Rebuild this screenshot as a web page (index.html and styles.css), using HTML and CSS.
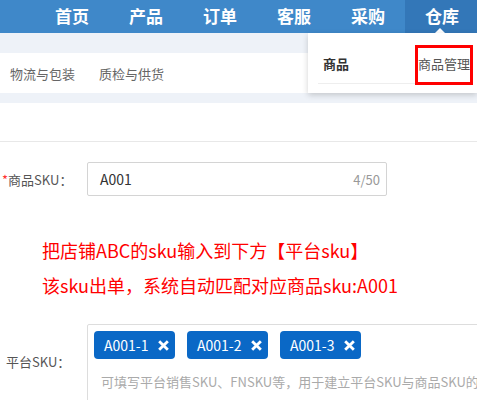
FILE: index.html
```html
<!DOCTYPE html>
<html lang="zh-CN">
<head>
    <meta charset="UTF-8">
    <meta name="viewport" content="width=device-width, initial-scale=1.0">
    <title>商品管理</title>
    <link rel="stylesheet" href="styles.css">
</head>
<body>
    <div id="page">
        <!-- Top navigation -->
        <nav id="nav-top">
            <a class="nav-item">首页</a>
            <a class="nav-item">产品</a>
            <a class="nav-item">订单</a>
            <a class="nav-item">客服</a>
            <a class="nav-item">采购</a>
            <a class="nav-item active">仓库</a>
        </nav>

        <div id="dropdown">
            <div class="dropdown-row">
                <span class="dropdown-title">商品</span>
                <span class="dropdown-link">商品管理</span>
            </div>
        </div>

        <div class="band"></div>
        <div id="sub-nav">
            <span class="sub-item">物流与包装</span>
            <span class="sub-item">质检与供货</span>
        </div>
        <div class="band short"></div>

        <!-- Form -->
        <div id="form-head"></div>
        <div class="form-row">
            <label class="form-label"><em>*</em>商品SKU：</label>
            <div class="text-input">
                <span class="input-value">A001</span>
                <span class="input-count">4/50</span>
            </div>
        </div>

        <div class="note">
            <p>把店铺ABC的sku输入到下方【平台sku】</p>
            <p>该sku出单，系统自动匹配对应商品sku:A001</p>
        </div>

        <div class="form-row tags-row">
            <label class="form-label">平台SKU：</label>
            <div class="tag-input">
                <div class="tags">
                    <span class="tag">A001-1<svg class="tag-close" viewBox="0 0 12 12"><path d="M2 2L10 10M10 2L2 10"/></svg></span>
                    <span class="tag">A001-2<svg class="tag-close" viewBox="0 0 12 12"><path d="M2 2L10 10M10 2L2 10"/></svg></span>
                    <span class="tag">A001-3<svg class="tag-close" viewBox="0 0 12 12"><path d="M2 2L10 10M10 2L2 10"/></svg></span>
                </div>
                <span class="placeholder">可填写平台销售SKU、FNSKU等，用于建立平台SKU与商品SKU的关联</span>
            </div>
        </div>
    </div>
</body>
</html>
```

FILE: styles.css
```css
*{
    box-sizing: border-box;
}
body{
    margin: 0;
    font-family: "Noto Sans CJK SC", "Liberation Sans", sans-serif;
    color: #555;
    background: #fff;
    overflow: hidden;
}
#page{
    position: relative;
    width: 477px;
    height: 400px;
    overflow: hidden;
}
/*
* Top navigation
*/
#nav-top{
    display: flex;
    height: 33px;
    padding-left: 35px;
    background-color: #3f88c9;
}
.nav-item{
    flex: 0 0 74px;
    display: flex;
    align-items: center;
    justify-content: center;
    padding-bottom: 3px;
    color: #fff;
    font-size: 17px;
    font-weight: bold;
}
.nav-item.active{
    position: relative;
    background-color: #3377b8;
}
.nav-item.active::after{
    content: "";
    position: absolute;
    left: 30px;
    bottom: 0;
    border: 5px solid transparent;
    border-bottom-color: #fff;
    border-top: 0;
}
/*
* Sub navigation
*/
.band{
    height: 20px;
    background-color: #eef2f8;
}
.band.short{
    height: 10px;
}
#sub-nav{
    display: flex;
    align-items: center;
    gap: 24px;
    height: 40px;
    padding-left: 10px;
    font-size: 13px;
    color: #666;
}
/*
* Dropdown
*/
#dropdown{
    position: absolute;
    left: 308px;
    top: 33px;
    width: 169px;
    height: 60px;
    padding: 14px 6px 0 10px;
    background: #fff;
    box-shadow: 0 2px 6px rgba(0, 0, 0, 0.18);
    z-index: 2;
}
.dropdown-row{
    display: flex;
    align-items: center;
    justify-content: space-between;
    height: 37px;
    padding-left: 5px;
    border-bottom: 1px solid #eee;
}
.dropdown-title{
    font-size: 13px;
    font-weight: bold;
    color: #333;
    padding-bottom: 3px;
}
.dropdown-link{
    display: block;
    font-size: 13px;
    line-height: 15px;
    color: #555;
    padding: 9px 1px 12px 1px;
    outline: 3px solid #f00;
    outline-offset: -1px;
}
/*
* Form
*/
#form-head{
    height: 39px;
    border-bottom: 1px solid #e8e8e8;
}
.form-row{
    display: flex;
    align-items: center;
    margin-top: 20px;
}
.form-label{
    flex: 0 0 87px;
    padding-left: 2px;
    font-size: 13px;
    color: #555;
}
.form-label em{
    font-style: normal;
    color: #f33;
}
.text-input{
    display: flex;
    align-items: center;
    justify-content: space-between;
    width: 300px;
    height: 34px;
    padding: 0 6px 0 12px;
    border: 1px solid #d4d4d4;
    border-radius: 2px;
}
.input-value{
    font-size: 14px;
    color: #333;
}
.input-count{
    font-size: 13px;
    color: #999;
}
/*
* Note
*/
.note{
    margin-top: 37px;
    padding-left: 42px;
    color: #f00;
    font-size: 18px;
    line-height: 35px;
}
.note p{
    margin: 0;
    white-space: nowrap;
}
/*
* Platform SKU
*/
.tags-row{
    margin-top: 21px;
    align-items: flex-start;
}
.tags-row .form-label{
    padding-top: 28px;
    padding-left: 6px;
}
.tag-input{
    flex: 0 0 420px;
    height: 80px;
    padding: 6px 0 0 6px;
    border: 1px solid #ddd;
    border-radius: 2px;
    white-space: nowrap;
    overflow: hidden;
}
.tags{
    display: flex;
    gap: 12px;
}
.tag{
    display: flex;
    align-items: center;
    justify-content: space-between;
    width: 81px;
    height: 28px;
    padding: 0 5px 0 10px;
    background-color: #0a68c6;
    border-radius: 4px;
    color: #fff;
    font-size: 14px;
}
.tag-close{
    width: 13px;
    height: 13px;
    fill: none;
    stroke: #fff;
    stroke-width: 2.6;
}
.placeholder{
    display: block;
    margin-top: 13px;
    padding-left: 7px;
    font-size: 13px;
    color: #aaa;
}
```
